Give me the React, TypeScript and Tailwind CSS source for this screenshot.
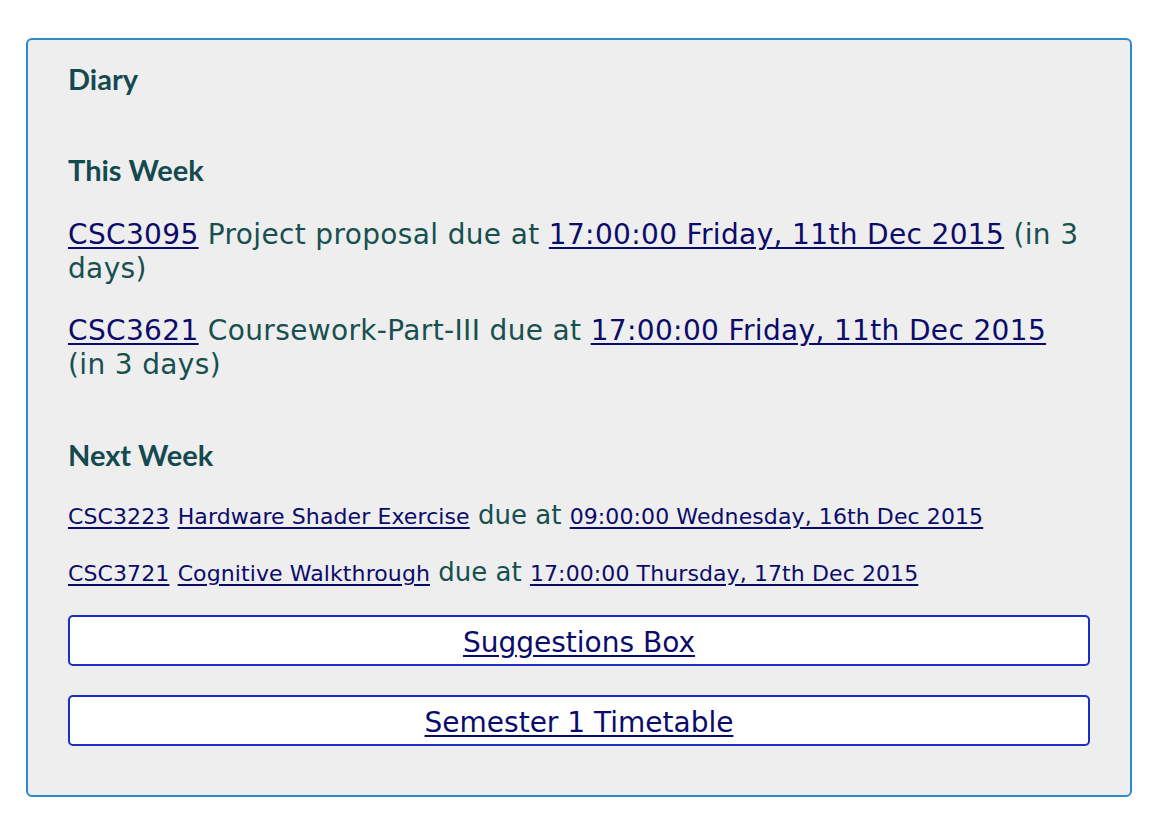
const body = "font-['DejaVu_Sans',Verdana,sans-serif]";

const Heading = ({ children, className }: { children: string; className: string }) => {
  return (
    <h3 className={`font-['Lato',sans-serif] font-bold text-[29px] leading-[34px] text-[#14494f] ${className}`}>
      {children}
    </h3>
  );
};

const A = ({ children, small }: { children: string; small?: boolean }) => {
  return (
    <a
      href="#"
      className={`text-[#0b0b6b] underline underline-offset-[3px] ${small ? "text-[22px] tracking-[0.1px]" : ""}`}
    >
      {children}
    </a>
  );
};

const ThisWeekItem = ({ code, title, when, className }: { code: string; title: string; when: string; className: string }) => {
  return (
    <p className={`text-[28px] leading-[34px] tracking-[0.35px] text-[#17504f] ${className}`}>
      <A>{code}</A> {title} due at <A>{when}</A> (in 3 days)
    </p>
  );
};

const NextWeekItem = ({ code, title, when, className }: { code: string; title: string; when: string; className: string }) => {
  return (
    <div className={`h-[33px] text-[26px] leading-[33px] text-[#17504f] ${className}`}>
      <A small>{code}</A> <A small>{title}</A> due at <A small>{when}</A>
    </div>
  );
};

const LinkButton = ({ label, className }: { label: string; className: string }) => {
  return (
    <div
      className={`h-[51px] flex items-center justify-center pt-[5px] bg-white border-2 border-[#1d2ec2] rounded-[5px] ${className}`}
    >
      <a href="#" className="text-[28px] leading-[34px] text-[#0b0b6b] underline underline-offset-[3px]">
        {label}
      </a>
    </div>
  );
};

export default function App() {
  return (
    <div className={`min-h-screen bg-white pt-[38px] pl-[26px] ${body}`}>
      <section className="w-[1106px] bg-[#eeeeee] border-2 border-[#2a8bc6] rounded-[6px] px-[40px] pt-[22px] pb-[49px]">
        <Heading className="">Diary</Heading>
        <Heading className="mt-[57px]">This Week</Heading>
        <ThisWeekItem
          className="mt-[31px]"
          code="CSC3095"
          title="Project proposal"
          when="17:00:00 Friday, 11th Dec 2015"
        />
        <ThisWeekItem
          className="mt-[28px]"
          code="CSC3621"
          title="Coursework-Part-III"
          when="17:00:00 Friday, 11th Dec 2015"
        />
        <Heading className="mt-[56px]">Next Week</Heading>
        <NextWeekItem
          className="mt-[27px]"
          code="CSC3223"
          title="Hardware Shader Exercise"
          when="09:00:00 Wednesday, 16th Dec 2015"
        />
        <NextWeekItem
          className="mt-[24px]"
          code="CSC3721"
          title="Cognitive Walkthrough"
          when="17:00:00 Thursday, 17th Dec 2015"
        />
        <LinkButton className="mt-[26px]" label="Suggestions Box" />
        <LinkButton className="mt-[29px]" label="Semester 1 Timetable" />
      </section>
    </div>
  );
}
